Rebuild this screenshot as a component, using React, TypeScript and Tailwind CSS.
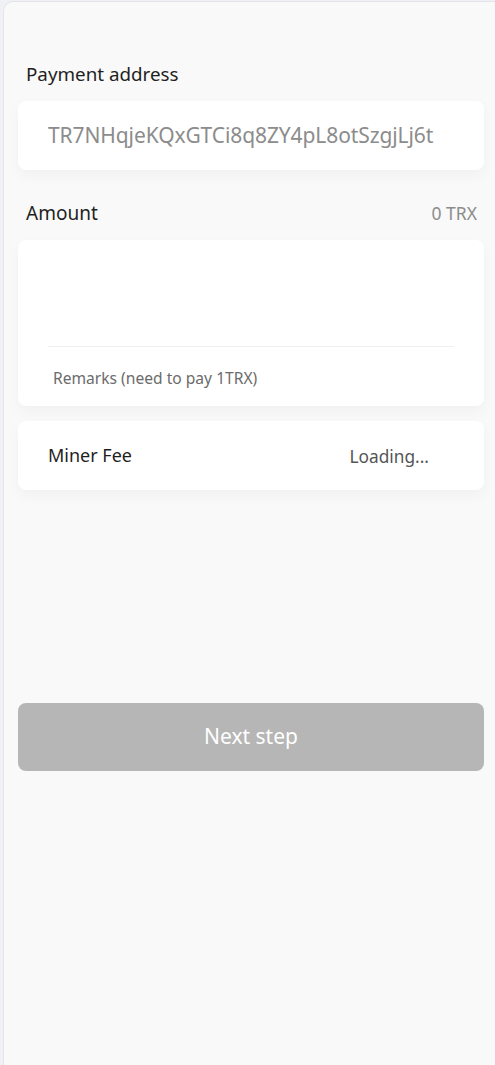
import React from "react";

export default function App() {
  return (
    <div
      className="min-h-[1065px] w-full bg-[#f0f1f4] pl-[3px] pt-[1px] overflow-hidden"
      style={{ fontFamily: '"Noto Sans", "Open Sans", sans-serif' }}
    >
      <div className="min-h-[1064px] w-[500px] rounded-tl-[10px] border-l border-t border-[#e3e5ea] bg-[#f8f9f8] pl-[14px] pr-[14px]">
        <div className="w-[466px]">
          <div className="pt-[57px] pl-[8px] text-[18.8px] leading-[30px] text-[#1f1f1f]">Payment address</div>
          <div className="mt-[12px] flex h-[69px] items-center rounded-[8px] bg-white pl-[30px] shadow-[0_6px_14px_rgba(0,0,0,0.035)]">
            <span className="text-[21px] tracking-[-0.1px] text-[#8c8c8c]">TR7NHqjeKQxGTCi8q8ZY4pL8otSzgjLj6t</span>
          </div>
          <div className="mt-[28px] flex items-center justify-between pl-[8px] pr-[7px]">
            <span className="text-[19px] leading-[30px] text-[#1f1f1f]">Amount</span>
            <span className="text-[17.5px] text-[#8c8c8c]">0 TRX</span>
          </div>
          <div className="mt-[12px] h-[166px] rounded-[8px] bg-white px-[30px] shadow-[0_6px_14px_rgba(0,0,0,0.035)]">
            <div className="h-[107px] border-b border-[#f0f0f0]"></div>
            <div className="pl-[5px] pt-[19px] text-[15.6px] leading-[24px] text-[#6b6b6b]">Remarks (need to pay 1TRX)</div>
          </div>
          <div className="mt-[15px] flex h-[69px] items-center justify-between rounded-[8px] bg-white pl-[30px] pr-[55px] shadow-[0_6px_14px_rgba(0,0,0,0.035)]">
            <span className="text-[18px] text-[#1f1f1f]">Miner Fee</span>
            <span className="mt-[2px] text-[17.3px] text-[#555555]">Loading...</span>
          </div>
          <div className="mt-[213px] flex h-[68px] items-center justify-center rounded-[8px] bg-[#b6b6b6]">
            <span className="text-[21px] text-white">Next step</span>
          </div>
        </div>
      </div>
    </div>
  );
}
